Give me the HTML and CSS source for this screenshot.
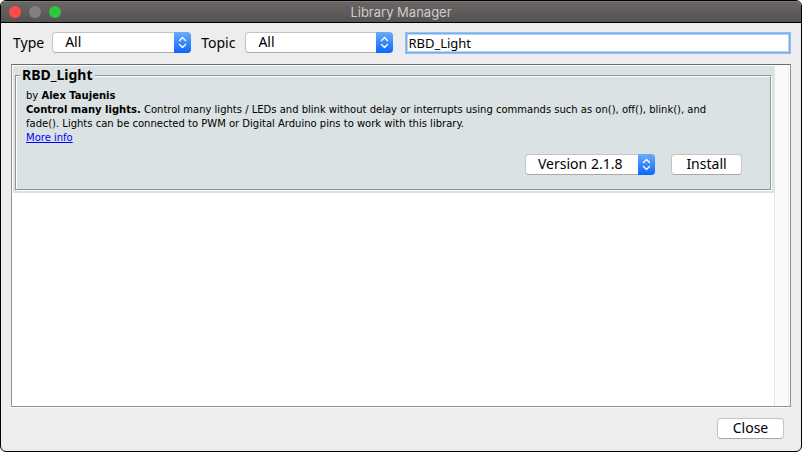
FILE: index.html
```html
<!DOCTYPE html>
<html lang="en">
<head>
<meta charset="utf-8">
<title>Library Manager</title>
<link rel="stylesheet" href="styles.css">
</head>
<body>
<div class="window">
  <header class="titlebar">
    <div class="lights">
      <button class="light light-close" aria-label="Close window"></button>
      <button class="light light-min" aria-label="Minimize" disabled></button>
      <button class="light light-zoom" aria-label="Zoom"></button>
    </div>
    <h1 class="title">Library Manager</h1>
  </header>
  <form class="toolbar">
    <label for="type">Type</label>
    <span class="select">
      <select id="type"><option>All</option></select>
      <svg class="arrows" viewBox="0 0 17 21" aria-hidden="true"><path d="M5.5 8.5l3-3 3 3M5.5 12.5l3 3 3-3"/></svg>
    </span>
    <label class="topic-label" for="topic">Topic</label>
    <span class="select select-topic">
      <select id="topic"><option>All</option></select>
      <svg class="arrows" viewBox="0 0 17 21" aria-hidden="true"><path d="M5.5 8.5l3-3 3 3M5.5 12.5l3 3 3-3"/></svg>
    </span>
    <input class="search" type="text" value="RBD_Light" aria-label="Filter your search">
  </form>
  <main class="list">
    <div class="rows">
      <article class="row">
        <fieldset class="library">
          <legend>RBD_Light</legend>
          <div class="info">
            <p>by <b>Alex Taujenis</b></p>
            <p><b>Control many lights.</b> Control many lights / LEDs and blink without delay or interrupts using commands such as on(), off(), blink(), and fade(). Lights can be connected to PWM or Digital Arduino pins to work with this library.</p>
            <p><a href="#">More info</a></p>
          </div>
          <div class="actions">
            <span class="select select-version">
              <select id="version" aria-label="Version"><option>Version 2.1.8</option></select>
              <svg class="arrows" viewBox="0 0 17 21" aria-hidden="true"><path d="M5.5 8.5l3-3 3 3M5.5 12.5l3 3 3-3"/></svg>
            </span>
            <button class="button">Install</button>
          </div>
        </fieldset>
      </article>
    </div>
    <div class="scroll-track"></div>
  </main>
  <footer class="footer"><button class="button">Close</button></footer>
</div>
</body>
</html>
```

FILE: styles.css
```css
* { box-sizing: border-box; }
html { height: 100%; background: #fff; }
body {
  height: 100%;
  margin: 0;
  color: #000;
  font: 14px/16px "Noto Sans", "Open Sans", sans-serif;
}
.window {
  display: flex;
  flex-direction: column;
  height: 100%;
  overflow: hidden;
  border: 1px solid #000;
  border-radius: 6px;
  background: #ededed;
}
.titlebar {
  display: grid;
  grid-template-columns: 1fr auto 1fr;
  align-items: center;
  height: 22px;
  padding: 0 8px;
  border-top: 1px solid #7b7877;
  border-bottom: 1px solid #000;
  background: linear-gradient(#696665, #555251);
}
.lights { display: flex; gap: 8px; }
.light {
  width: 12px;
  height: 12px;
  padding: 0;
  border: 0;
  border-radius: 50%;
}
.light-close { background: #ff4a48; }
.light-min { background: #838180; }
.light-zoom { background: #2dc63f; }
.title {
  margin: 0;
  color: #cecccb;
  font: 400 13px/16px Inter, Roboto, sans-serif;
}
.toolbar {
  display: flex;
  align-items: flex-start;
  padding: 9px 11px 9px 12px;
}
.toolbar label { margin-right: 8px; line-height: 22px; }
.toolbar .topic-label { margin: 0 10px; }
.select {
  position: relative;
  display: flex;
  width: 139px;
  height: 21px;
}
.select-topic { width: 148px; }
.select-version { width: 130px; }
.select select {
  width: 100%;
  margin: 0;
  padding: 0 18px 1px 12px;
  appearance: none;
  border: 1px solid #c4c4c4;
  border-bottom-color: #a9a9a9;
  border-radius: 4px;
  outline: 0;
  background: #fff;
  color: #000;
  font: inherit;
}
.arrows {
  position: absolute;
  top: 0;
  right: 0;
  width: 17px;
  height: 21px;
  border-radius: 0 4px 4px 0;
  background: linear-gradient(#6cabfa, #0a66ff);
  pointer-events: none;
}
.arrows path {
  fill: none;
  stroke: #fff;
  stroke-width: 1.4;
  stroke-linecap: round;
  stroke-linejoin: round;
}
.search {
  flex: 1;
  min-width: 0;
  height: 20px;
  margin: 1px 0 1px 13px;
  padding: 0 1px;
  border: 1px solid #7aaeea;
  border-radius: 0;
  outline: 0;
  box-shadow: 0 0 0 1px #91c0f5, inset 0 0 0 1px #b5d5f8;
  background: #fff;
  color: #000;
  font: inherit;
  font-size: 13px;
}
.list {
  display: flex;
  flex: 1;
  min-height: 0;
  margin: 1px 10px 0;
  padding: 1px 1px 0;
  border: 1px solid #929292;
  border-top-color: #6c6c6c;
  background: #fff;
  box-shadow: 0 1px 0 #fafafa;
}
.rows { flex: 1; min-width: 0; }
.row { padding: 1px 3px 3px 2px; background: #dae2e3; }
.scroll-track {
  width: 15px;
  border-left: 1px solid #e6e6e6;
  border-right: 1px solid #ececec;
  background: #fafafa;
}
.library {
  min-width: 0;
  margin: 0;
  padding: 6px 10px 14px 10px;
  border: 1px solid #8c9696;
  box-shadow: 1px 1px 0 #fff, inset 1px 1px 0 #fff;
}
.library legend {
  margin-left: -6px;
  padding: 0 2px;
  background: #dae2e3;
  font-weight: 700;
}
.info { padding-right: 30px; font: 10px/14px "DejaVu Sans", sans-serif; }
.info p { margin: 0; }
.info a { color: #00f; }
.actions {
  display: flex;
  justify-content: flex-end;
  gap: 16px;
  margin-top: 9px;
  padding-right: 18px;
}
.button {
  min-width: 71px;
  height: 21px;
  padding: 0 14px 1px;
  border: 1px solid #c4c4c4;
  border-bottom-color: #a9a9a9;
  border-radius: 4px;
  background: #fff;
  color: #000;
  font: inherit;
}
.footer {
  display: flex;
  justify-content: flex-end;
  padding: 11px 17px 12px;
}
.footer .button { min-width: 67px; }
```
